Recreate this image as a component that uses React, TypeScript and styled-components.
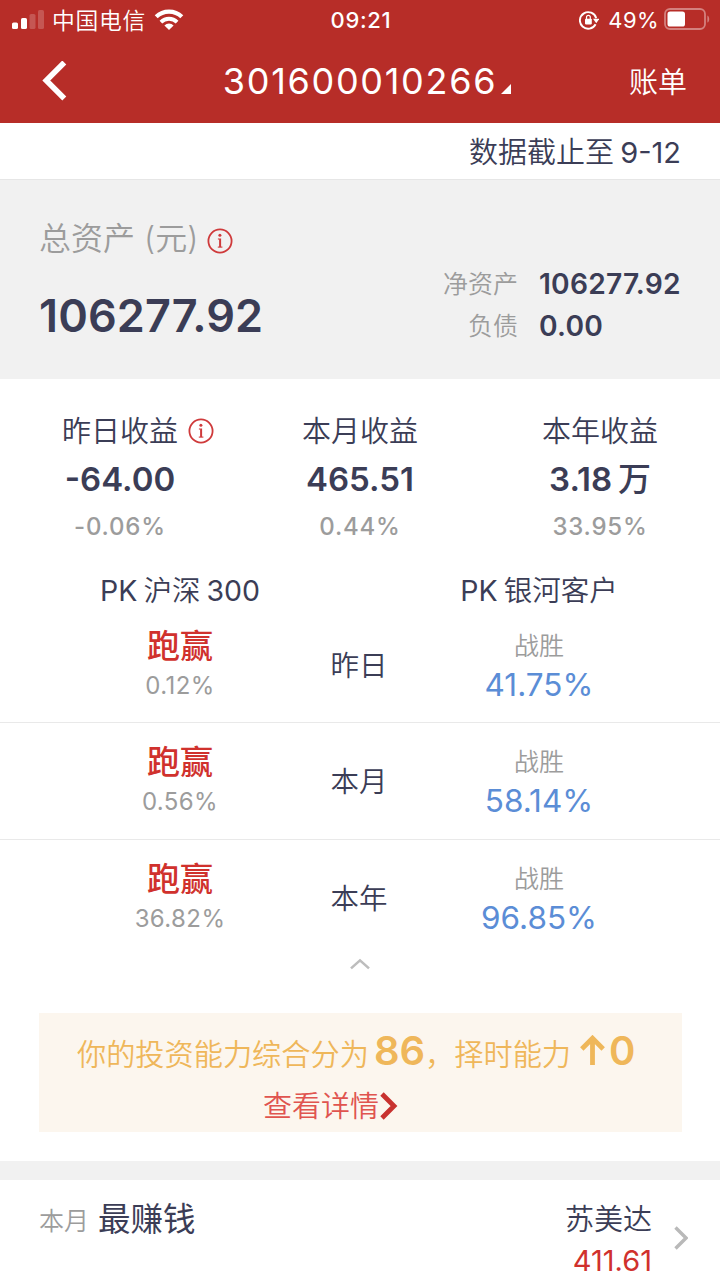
import React from "react";
import styled, { createGlobalStyle } from "styled-components";

const ink = "#3b3d56";
const muted = "#9c9c9c";
const brand = "#b72d28";

const GlobalStyle = createGlobalStyle`
  * { box-sizing: border-box; }
  html, body { margin: 0; padding: 0; background: #fff; overflow: hidden; }
  body { font-family: Inter, "Noto Sans CJK SC", sans-serif; color: ${ink}; }
`;

const Screen = styled.div`
  width: 720px;
  height: 1280px;
  overflow: hidden;
  display: flex;
  flex-direction: column;
  background: #fff;
  white-space: nowrap;
`;

const Header = styled.header`
  height: 123px;
  flex: none;
  background: ${brand};
  color: #fff;
`;

const StatusBar = styled.div`
  height: 40px;
  padding: 0 10px 0 12px;
  display: grid;
  grid-template-columns: 1fr auto 1fr;
  align-items: center;
  font-size: 22px;
  line-height: 40px;
`;

const StatusSide = styled.div<{ $end?: boolean }>`
  display: flex;
  align-items: center;
  justify-content: ${(p) => (p.$end ? "flex-end" : "flex-start")};
`;

const Carrier = styled.span`
  margin: 1px 8px -1px 8px;
  font-size: 22.8px;
  font-weight: 350;
  letter-spacing: 0.7px;
`;

const Clock = styled.span`
  font-weight: 500;
  letter-spacing: 0.7px;
`;

const BatteryText = styled.span`
  margin: 0 5px 0 9px;
  letter-spacing: 0.4px;
`;

const NavBar = styled.nav`
  height: 82px;
  padding: 0 33px 0 42px;
  display: grid;
  grid-template-columns: 100px 1fr 100px;
  align-items: center;
`;

const AccountPicker = styled.div`
  display: flex;
  align-items: center;
  justify-content: center;
  font-size: 36px;
  line-height: 81px;
  letter-spacing: 1.7px;
  padding-left: 5px;
`;

const PickerMark = styled.svg`
  margin: 15px 0 0 4px;
`;

const NavLink = styled.span`
  padding-top: 3px;
  text-align: right;
  font-size: 29px;
  font-weight: 350;
  line-height: 40px;
`;

const DateRow = styled.div`
  height: 57px;
  flex: none;
  padding-right: 39px;
  text-align: right;
  font-size: 29px;
  font-weight: 350;
  line-height: 59px;
  word-spacing: -2px;
  border-bottom: 1px solid #e6e6e6;
`;

/* Latin letters and figures set beside lighter Chinese text. */
const Latin = styled.span`
  font-weight: 400;
`;

const AssetPanel = styled.section`
  height: 199px;
  flex: none;
  padding: 0 39px;
  background: #f1f1f1;
  display: flex;
  justify-content: space-between;
`;

const TotalBlock = styled.div`
  padding-top: 36px;
`;

const TotalLabel = styled.div`
  display: flex;
  align-items: center;
  gap: 9px;
  height: 46px;
  font-size: 32px;
  font-weight: 350;
  line-height: 46px;
  color: ${muted};

  svg {
    margin-top: 4px;
  }
`;

const TotalValue = styled.div`
  margin-top: 23px;
  font-size: 45px;
  font-weight: 600;
  line-height: 61px;
  letter-spacing: 0.1px;
`;

const BreakdownList = styled.dl`
  margin: 83px 0 0;
  display: grid;
  grid-template-columns: auto 142px;
  grid-auto-rows: 42px;
  column-gap: 21px;
  line-height: 42px;
`;

const BreakdownLabel = styled.dt`
  text-align: right;
  font-size: 25px;
  font-weight: 350;
  color: ${muted};
`;

const BreakdownValue = styled.dd`
  margin: 0;
  font-size: 28.2px;
  font-weight: 600;
  letter-spacing: 0.2px;
`;

const ProfitRow = styled.section`
  height: 177px;
  flex: none;
  padding-top: 31px;
  display: grid;
  grid-template-columns: repeat(3, 1fr);
  text-align: center;
`;

const ProfitLabel = styled.div`
  display: flex;
  justify-content: center;
  align-items: center;
  height: 44px;
  font-size: 29px;
  font-weight: 350;
  line-height: 44px;
`;

const LabelIcon = styled.span`
  display: flex;
  margin: -2px -36px 0 10px;
`;

const ProfitValue = styled.div`
  font-size: 33px;
  font-weight: 600;
  line-height: 50px;
  word-spacing: -3px;
`;

const Unit = styled.span`
  font-weight: 500;
`;

const ProfitRate = styled.div`
  font-size: 24px;
  font-weight: 500;
  line-height: 46px;
  letter-spacing: 0.8px;
  color: ${muted};
`;

const PkHeader = styled.div`
  height: 51px;
  flex: none;
  display: grid;
  grid-template-columns: 360px 358px;
  text-align: center;
  font-size: 28.5px;
  font-weight: 350;
  line-height: 70px;
  word-spacing: -2px;
`;

const PkRow = styled.div<{ $last?: boolean }>`
  height: 116.3px;
  flex: none;
  padding: 0 90px;
  display: grid;
  grid-template-columns: repeat(3, 180px);
  text-align: center;
  border-bottom: 1px solid ${(p) => (p.$last ? "transparent" : "#e9e9e9")};
`;

const PkCell = styled.div`
  padding-top: 18px;
`;

const Outcome = styled.div`
  font-size: 33px;
  font-weight: 500;
  line-height: 42px;
  color: #d0312d;
`;

const OutcomeRate = styled.div`
  font-size: 24px;
  line-height: 38px;
  letter-spacing: 0.4px;
  color: ${muted};
`;

const Period = styled.div`
  font-size: 28.5px;
  font-weight: 350;
  line-height: 118px;
  margin-left: -2px;
`;

const BeatLabel = styled.div`
  font-size: 25px;
  font-weight: 350;
  line-height: 43px;
  color: ${muted};
  margin-left: -2px;
`;

const BeatRate = styled.div`
  font-size: 31.5px;
  line-height: 34px;
  color: #5b8dd6;
  margin-left: -2px;
`;

const CollapseBar = styled.div`
  height: 57.1px;
  flex: none;
  display: flex;
  justify-content: center;
  padding-top: 2px;
`;

const ScoreBanner = styled.section`
  height: 119px;
  flex: none;
  margin: 0 38px 29px 39px;
  background: #fcf6ee;
`;

const ScoreLine = styled.div`
  display: flex;
  align-items: center;
  padding-left: 38px;
  height: 75px;
  font-size: 29.2px;
  font-weight: 350;
  line-height: 75px;
  color: #efb75a;
`;

const ScoreText = styled.span`
  padding-top: 8px;
`;

const ScoreFigure = styled.strong<{ $gap: number }>`
  font-size: 40px;
  font-weight: 600;
  margin-left: ${(p) => p.$gap}px;
`;

const RiseArrow = styled.svg`
  margin-left: 9px;
`;

const DetailLink = styled.div`
  display: flex;
  align-items: center;
  justify-content: center;
  height: 36px;
  padding-right: 60px;
  font-size: 29px;
  font-weight: 350;
  line-height: 36px;
  color: #e0544f;
`;

const DetailText = styled.span`
  padding-top: 3px;
`;

const SectionGap = styled.div`
  height: 19px;
  flex: none;
  background: #f1f1f1;
`;

const TopStockRow = styled.section`
  height: 100px;
  flex: none;
  padding: 0 32px 0 39px;
  display: flex;
  justify-content: space-between;
`;

const TopStockTitle = styled.div`
  display: flex;
  gap: 9px;
  font-size: 32.5px;
  font-weight: 400;
  line-height: 79px;
`;

const TopStockPeriod = styled.span`
  font-size: 25px;
  font-weight: 350;
  line-height: 82px;
  color: ${muted};
`;

const StockSummary = styled.div`
  display: flex;
`;

const StockFigures = styled.div`
  text-align: right;
  padding-top: 18px;
  margin-right: 22px;
`;

const StockName = styled.div`
  font-size: 29px;
  font-weight: 350;
  line-height: 43px;
`;

const StockProfit = styled.div`
  font-size: 29px;
  line-height: 40px;
  color: #d0312d;
`;

const RowChevron = styled.svg`
  margin-top: 46px;
`;

const SignalIcon = () => (
  <svg width="32" height="20" viewBox="0 0 32 20" fill="#fff">
    <rect x="0" y="12.5" width="6" height="6.5" rx="1.6" />
    <rect x="9" y="8" width="6" height="11" rx="1.6" />
    <rect x="17.5" y="4" width="6" height="15" rx="1.6" opacity="0.2" />
    <rect x="26" y="0" width="6" height="19" rx="1.6" opacity="0.2" />
  </svg>
);

const WifiIcon = () => (
  <svg width="30" height="22" viewBox="0 0 30 22" fill="none" stroke="#fff">
    <path d="M2.2 7.8a18.2 18.2 0 0 1 25.6 0" strokeWidth="4.2" />
    <path d="M6.9 13.1a11.5 11.5 0 0 1 16.2 0" strokeWidth="3.8" />
    <path d="M15 21l-4.6-4.5a6.5 6.5 0 0 1 9.2 0z" fill="#fff" stroke="none" />
  </svg>
);

const RotationLockIcon = () => (
  <svg width="20" height="20" viewBox="0 0 20 20" fill="none" stroke="#fff">
    <path d="M16.6 14.2A8.3 8.3 0 1 1 17.2 8.2" strokeWidth="1.9" />
    <path d="M14 8.8h6.4l-3.1 4.4z" fill="#fff" stroke="none" />
    <rect x="6" y="8.8" width="6.8" height="5.6" rx="0.8" fill="#fff" stroke="none" />
    <path d="M7.5 9V7.2a1.9 1.9 0 0 1 3.8 0V9" strokeWidth="1.2" />
  </svg>
);

const BatteryIcon = () => (
  <svg width="46" height="24" viewBox="0 0 46 24" fill="none">
    <rect x="1" y="1" width="40" height="20" rx="5" stroke="#fff" strokeOpacity="0.4" strokeWidth="1.8" />
    <rect x="3.5" y="3.5" width="17.5" height="15" rx="2.6" fill="#fff" />
    <path d="M43.4 7.4c2.4 1 2.4 6.2 0 7.2z" fill="#fff" fillOpacity="0.4" />
  </svg>
);

const InfoIcon = () => (
  <svg width="26" height="26" viewBox="0 0 26 26" fill="none" stroke="#cf3a3b">
    <circle cx="13" cy="13" r="11.6" strokeWidth="1.8" />
    <circle cx="12.9" cy="7.2" r="1.5" fill="#cf3a3b" stroke="none" />
    <path d="M10.9 11h1.2" strokeWidth="1.1" />
    <path d="M13.1 10.5v8.6" strokeWidth="2" />
    <path d="M10.8 19.1h4.6" strokeWidth="1.1" />
  </svg>
);

const profits = [
  { label: "昨日收益", value: "-64.00", unit: "", rate: "-0.06%", info: true },
  { label: "本月收益", value: "465.51", unit: "", rate: "0.44%", info: false },
  { label: "本年收益", value: "3.18", unit: "万", rate: "33.95%", info: false },
];

const comparisons = [
  { period: "昨日", rate: "0.12%", beat: "41.75%" },
  { period: "本月", rate: "0.56%", beat: "58.14%" },
  { period: "本年", rate: "36.82%", beat: "96.85%" },
];

export default function App() {
  return (
    <>
      <GlobalStyle />
      <Screen>
        <Header>
          <StatusBar>
            <StatusSide>
              <SignalIcon />
              <Carrier>中国电信</Carrier>
              <WifiIcon />
            </StatusSide>
            <Clock>09:21</Clock>
            <StatusSide $end>
              <RotationLockIcon />
              <BatteryText>49%</BatteryText>
              <BatteryIcon />
            </StatusSide>
          </StatusBar>
          <NavBar>
            <svg width="26" height="40" viewBox="0 0 26 40" fill="none" stroke="#fff" strokeWidth="5.6">
              <path d="M22.3 1.5L4.3 19.5L22.3 37.5" />
            </svg>
            <AccountPicker>
              301600010266
              <PickerMark width="10" height="10" viewBox="0 0 10 10">
                <path d="M10 0v10H0z" fill="#fff" />
              </PickerMark>
            </AccountPicker>
            <NavLink>账单</NavLink>
          </NavBar>
        </Header>

        <DateRow>
          数据截止至 <Latin>9-12</Latin>
        </DateRow>

        <AssetPanel>
          <TotalBlock>
            <TotalLabel>
              总资产 (元)
              <InfoIcon />
            </TotalLabel>
            <TotalValue>106277.92</TotalValue>
          </TotalBlock>
          <BreakdownList>
            <BreakdownLabel>净资产</BreakdownLabel>
            <BreakdownValue>106277.92</BreakdownValue>
            <BreakdownLabel>负债</BreakdownLabel>
            <BreakdownValue>0.00</BreakdownValue>
          </BreakdownList>
        </AssetPanel>

        <ProfitRow>
          {profits.map((p) => (
            <div key={p.label}>
              <ProfitLabel>
                {p.label}
                {p.info && (
                  <LabelIcon>
                    <InfoIcon />
                  </LabelIcon>
                )}
              </ProfitLabel>
              <ProfitValue>
                {p.value}
                {p.unit && <Unit> {p.unit}</Unit>}
              </ProfitValue>
              <ProfitRate>{p.rate}</ProfitRate>
            </div>
          ))}
        </ProfitRow>

        <PkHeader>
          <span>
            <Latin>PK</Latin> 沪深 <Latin>300</Latin>
          </span>
          <span>
            <Latin>PK</Latin> 银河客户
          </span>
        </PkHeader>
        {comparisons.map((c, i) => (
          <PkRow key={c.period} $last={i === comparisons.length - 1}>
            <PkCell>
              <Outcome>跑赢</Outcome>
              <OutcomeRate>{c.rate}</OutcomeRate>
            </PkCell>
            <Period>{c.period}</Period>
            <PkCell>
              <BeatLabel>战胜</BeatLabel>
              <BeatRate>{c.beat}</BeatRate>
            </PkCell>
          </PkRow>
        ))}

        <CollapseBar>
          <svg width="22" height="12" viewBox="0 0 22 12" fill="none" stroke="#bdbdbd" strokeWidth="2.6">
            <path d="M2 10.4L11 2.4L20 10.4" />
          </svg>
        </CollapseBar>

        <ScoreBanner>
          <ScoreLine>
            <ScoreText>你的投资能力综合分为</ScoreText>
            <ScoreFigure $gap={5}>86</ScoreFigure>
            <ScoreText>，择时能力</ScoreText>
            <RiseArrow width="25" height="30" viewBox="0 0 25 30" fill="none" stroke="#efb75a" strokeWidth="4.8">
              <path d="M12.5 30V4M1.8 14L12.5 3.2L23.2 14" />
            </RiseArrow>
            <ScoreFigure $gap={4}>0</ScoreFigure>
          </ScoreLine>
          <DetailLink>
            <DetailText>查看详情</DetailText>
            <svg width="19" height="28" viewBox="0 0 19 28" fill="none" stroke="#c8322f" strokeWidth="4.8">
              <path d="M3 2L15 14L3 26" />
            </svg>
          </DetailLink>
        </ScoreBanner>

        <SectionGap />

        <TopStockRow>
          <TopStockTitle>
            <TopStockPeriod>本月</TopStockPeriod>
            最赚钱
          </TopStockTitle>
          <StockSummary>
            <StockFigures>
              <StockName>苏美达</StockName>
              <StockProfit>411.61</StockProfit>
            </StockFigures>
            <RowChevron width="14" height="24" viewBox="0 0 14 24" fill="none" stroke="#b9b9b9" strokeWidth="3.4">
              <path d="M1.5 1.5L12 12L1.5 22.5" />
            </RowChevron>
          </StockSummary>
        </TopStockRow>
      </Screen>
    </>
  );
}
